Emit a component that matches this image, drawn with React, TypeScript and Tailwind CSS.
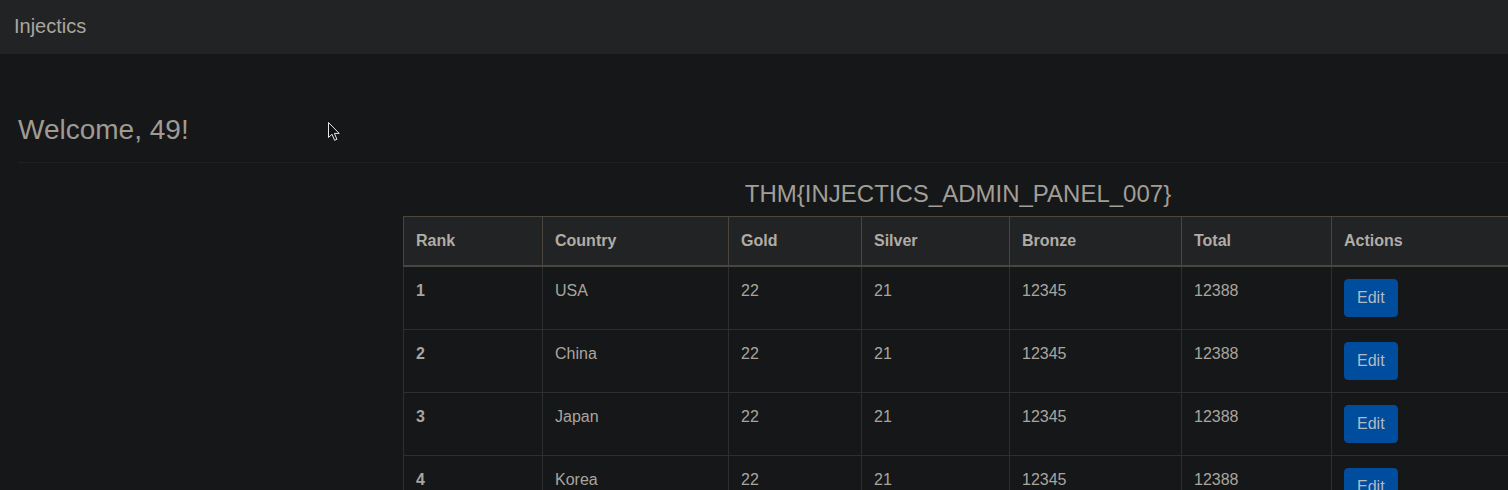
import React from "react";

const rows = [
  { rank: 1, country: "USA" },
  { rank: 2, country: "China" },
  { rank: 3, country: "Japan" },
  { rank: 4, country: "Korea" },
];

const cols = [139, 186, 133, 148, 172, 150, 182];
const heads = ["Rank", "Country", "Gold", "Silver", "Bronze", "Total", "Actions"];

export default function App() {
  return (
    <div
      className="relative w-[1508px] h-[490px] overflow-hidden bg-[#161719] text-[#a9a59d]"
      style={{ fontFamily: '"Liberation Sans", Arial, sans-serif' }}
    >
      <nav className="h-[54px] bg-[#222325] flex items-center pl-[14px]">
        <span className="text-[20px] leading-[30px] text-[#aaa69e] -mt-[2px]">Injectics</span>
      </nav>

      <div className="ml-[18px] mt-[59px] pb-[15px] border-b border-[#1f2022]">
        <h3 className="text-[28px] leading-[34px] text-[#9f9b93]">Welcome, 49!</h3>
      </div>

      <div className="ml-[403px] w-[1110px] mt-[16px]">
        <h4 className="text-center text-[24px] leading-[29px] text-[#a29e96] mb-[8px]">
          THM{"{"}INJECTICS_ADMIN_PANEL_007{"}"}
        </h4>
        <table className="w-[1110px] table-fixed border-collapse text-[16px] leading-[24px]">
          <colgroup>
            {cols.map((w, i) => (
              <col key={i} style={{ width: w }} />
            ))}
          </colgroup>
          <thead>
            <tr className="bg-[#222325]">
              {heads.map((h) => (
                <th
                  key={h}
                  className="text-left font-bold px-[12px] py-[12px] border border-[#4a463e] border-b-2 text-[#b1aca4]"
                >
                  {h}
                </th>
              ))}
            </tr>
          </thead>
          <tbody>
            {rows.map((r) => (
              <tr key={r.rank}>
                <td className="align-top font-bold px-[12px] py-[12px] border border-[#2c2e30] text-[#a9a59d]">
                  {r.rank}
                </td>
                <td className="align-top px-[12px] py-[12px] border border-[#2c2e30]">{r.country}</td>
                <td className="align-top px-[12px] py-[12px] border border-[#2c2e30]">22</td>
                <td className="align-top px-[12px] py-[12px] border border-[#2c2e30]">21</td>
                <td className="align-top px-[12px] py-[12px] border border-[#2c2e30]">12345</td>
                <td className="align-top px-[12px] py-[12px] border border-[#2c2e30]">12388</td>
                <td className="align-top px-[12px] py-[12px] border border-[#2c2e30]">
                  <button className="bg-[#004c9d] border border-[#004c9d] rounded-[4px] px-[12px] py-[6px] text-[16px] leading-[24px] text-[#b4bac3]">
                    Edit
                  </button>
                </td>
              </tr>
            ))}
          </tbody>
        </table>
      </div>

      <svg
        className="absolute left-[328px] top-[122px]"
        width="13"
        height="20"
        viewBox="0 0 13 20"
      >
        <path
          d="M0.5 0.5 L0.5 15.5 L4 12.2 L6.6 18.3 L8.9 17.3 L6.4 11.4 L11.2 11.4 Z"
          fill="#111"
          stroke="#e8e8e8"
          strokeWidth="1"
        />
      </svg>
    </div>
  );
}
